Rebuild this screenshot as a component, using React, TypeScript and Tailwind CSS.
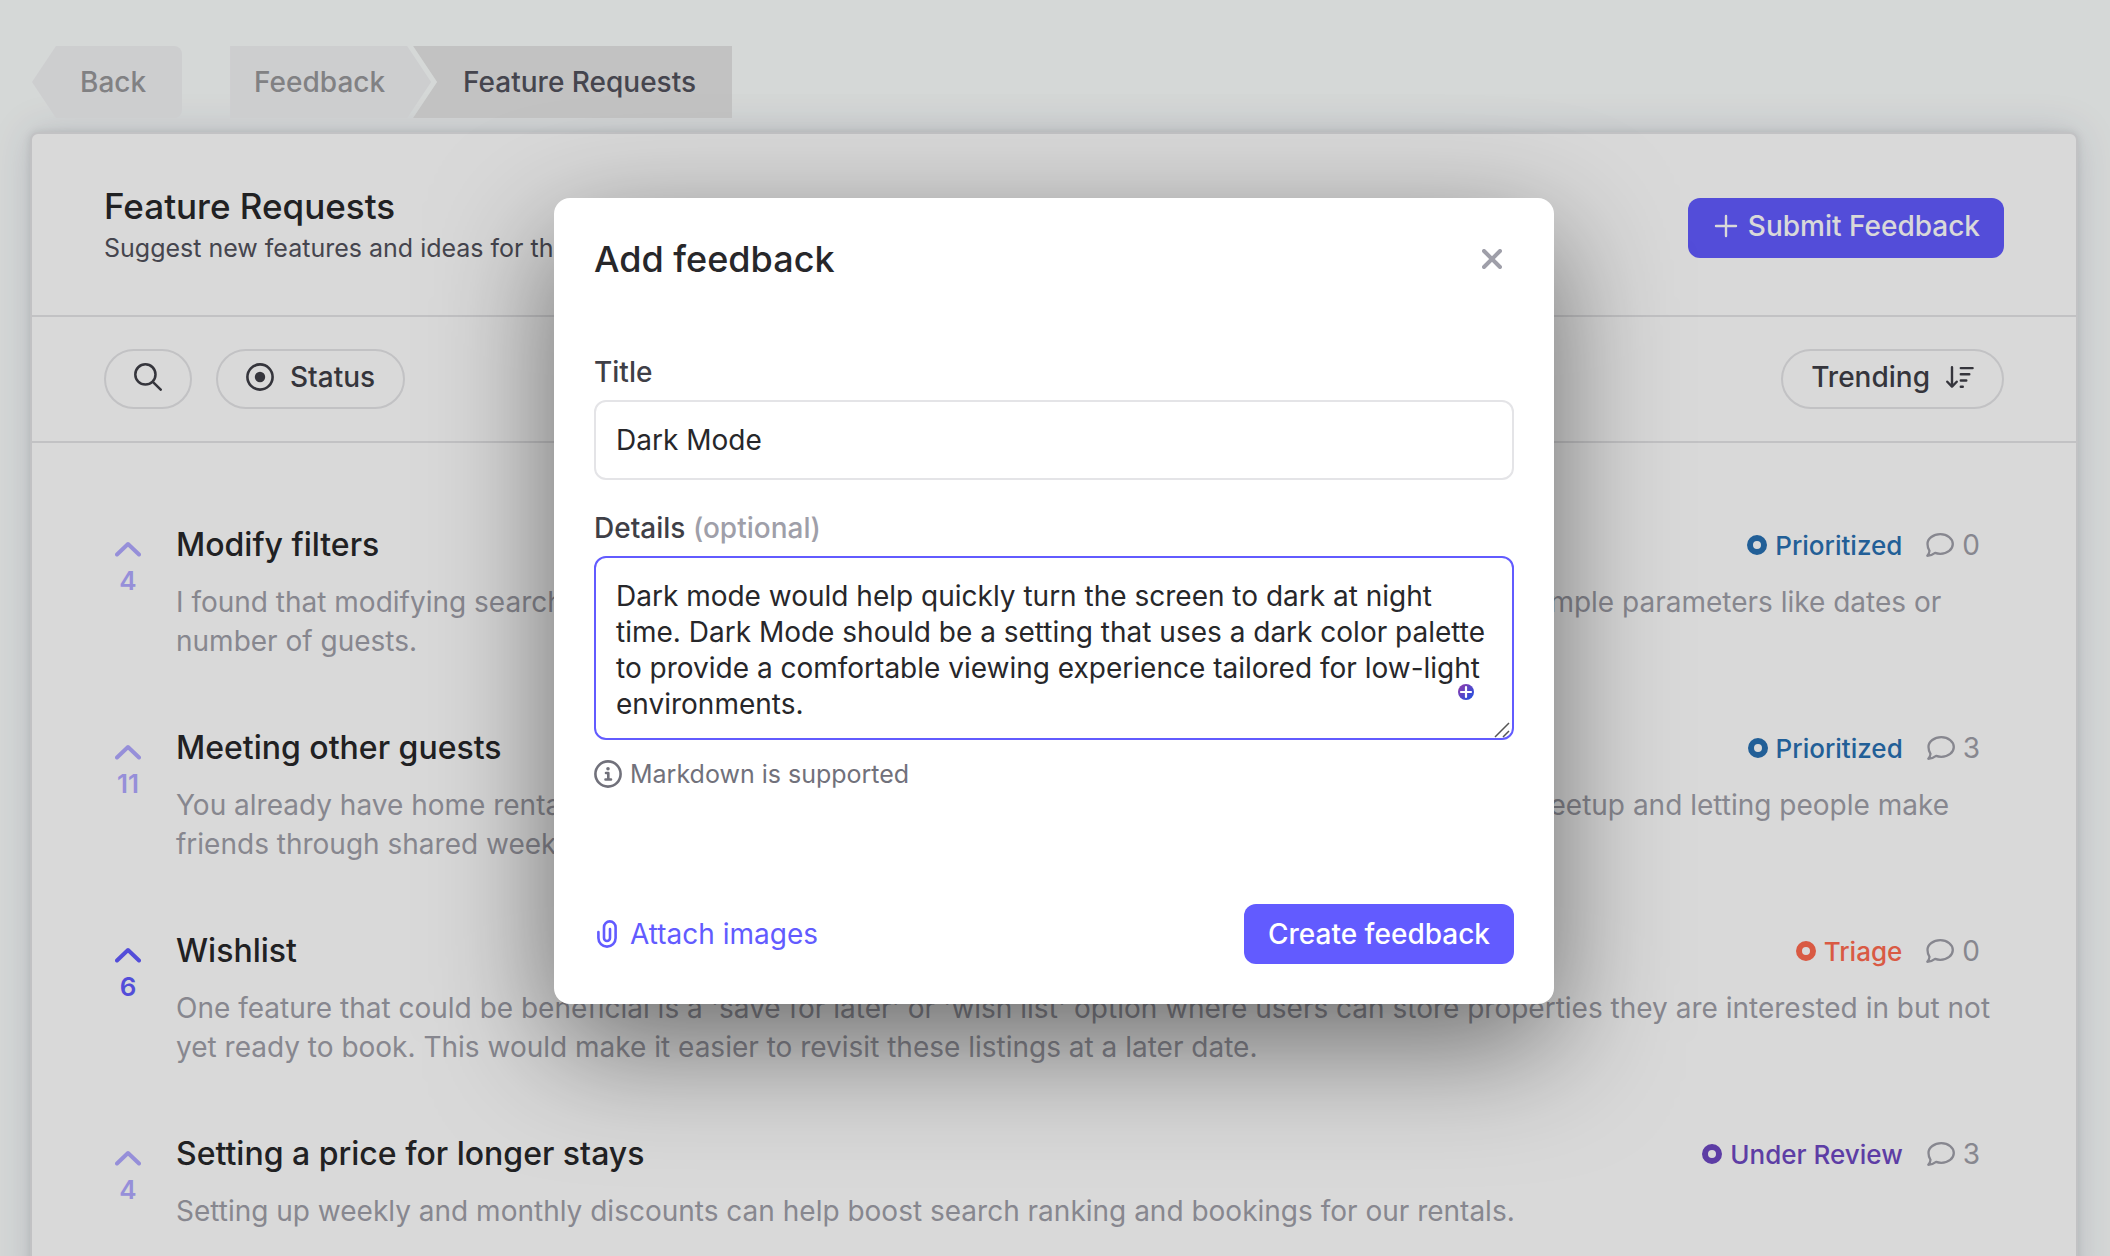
import React from "react";

type Post = {
  title: string;
  body: string;
  votes: number;
  voted?: boolean;
  status: "Prioritized" | "Triage" | "Under Review";
  comments: number;
};

const posts: Post[] = [
  {
    title: "Modify filters",
    body: "I found that modifying search filters can be rather confusing at times and it is too easy to lose track of simple parameters like dates or number of guests.",
    votes: 4,
    status: "Prioritized",
    comments: 0,
  },
  {
    title: "Meeting other guests",
    body: "You already have home rentals and experiences listed, so how about adding a weekly city community meetup and letting people make friends through shared weekend activities.",
    votes: 11,
    status: "Prioritized",
    comments: 3,
  },
  {
    title: "Wishlist",
    body: "One feature that could be beneficial is a 'save for later' or 'wish list' option where users can store properties they are interested in but not yet ready to book. This would make it easier to revisit these listings at a later date.",
    votes: 6,
    voted: true,
    status: "Triage",
    comments: 0,
  },
  {
    title: "Setting a price for longer stays",
    body: "Setting up weekly and monthly discounts can help boost search ranking and bookings for our rentals.",
    votes: 4,
    status: "Under Review",
    comments: 3,
  },
];

const statusColor: Record<Post["status"], string> = {
  Prioritized: "text-[#2970b2]",
  Triage: "text-[#ff6a4f]",
  "Under Review": "text-[#6e48c2]",
};

function SearchIcon() {
  return (
    <svg viewBox="0 0 28 28" className="size-7" fill="none" stroke="currentColor" strokeWidth="2.5" strokeLinecap="round" aria-hidden="true">
      <circle cx="11.4" cy="11.4" r="10.1" />
      <path d="M18.800 18.800l7.900 7.900" />
    </svg>
  );
}

function DotIcon() {
  return (
    <svg viewBox="0 0 28 28" className="size-7" fill="none" stroke="currentColor" strokeWidth="2.6" aria-hidden="true">
      <circle cx="14" cy="14" r="12.6" />
      <circle cx="14" cy="14" r="5.2" fill="currentColor" stroke="none" />
    </svg>
  );
}

function SortIcon() {
  return (
    <svg viewBox="0 0 28 22" className="h-[22px] w-7" fill="none" stroke="currentColor" strokeWidth="2.4" strokeLinecap="round" strokeLinejoin="round" aria-hidden="true">
      <path d="M6 1.200v19.400M1.300 15.700L6 20.700l4.700-5M14.800 2.100h11.800M14.800 8.300h8.500M14.800 14.500h5.500M14.800 20.700h2" />
    </svg>
  );
}

function CommentIcon() {
  return (
    <svg viewBox="0 0 28 24" className="h-6 w-7" fill="none" stroke="currentColor" strokeWidth="2.300" strokeLinejoin="round" aria-hidden="true">
      <path d="M14.300 1.200C21.300 1.200 26.800 5.500 26.800 11S21.300 20.800 14.300 20.800c-2 0-3.700-.3-5.200-.9C7.300 21.300 4.800 22.800 1.300 22.800c1.300-1.400 2.100-3 2.200-5C2.200 15.900 1.500 13.500 1.500 11 1.500 5.500 7.300 1.200 14.300 1.200z" />
    </svg>
  );
}

function PlusBadge() {
  return (
    <svg viewBox="0 0 16 16" className="size-4" aria-hidden="true">
      <defs>
        <linearGradient id="badge" x1="0" y1="0" x2="1" y2="1">
          <stop offset="0.2" stopColor="#7f3fb5" />
          <stop offset="0.9" stopColor="#2450e0" />
        </linearGradient>
      </defs>
      <circle cx="8" cy="8" r="8" fill="url(#badge)" />
      <path d="M8 3v10M3 8h10" stroke="#fff" strokeWidth="2.200" strokeLinecap="round" />
    </svg>
  );
}

function PostRow({ post }: { post: Post }) {
  return (
    <li className="flex items-start gap-6">
      <button
        type="button"
        aria-label={`Upvote ${post.title}`}
        className={`mt-4 flex w-12 flex-col items-center gap-2 text-[26px] leading-8 font-semibold ${post.voted ? "text-[#625bff]" : "text-[#b1a9ff]"}`}
      >
        <svg viewBox="0 0 26 16" className="h-4 w-[26px]" fill="none" stroke="currentColor" strokeWidth="4" strokeLinecap="round" strokeLinejoin="round" aria-hidden="true">
          <path d="M2 13.500L13 3l11 10.500" />
        </svg>
        {post.votes}
      </button>
      <div className="min-w-0 flex-1">
        <div className="flex items-center justify-between pr-6">
          <h2 className="text-[32px] leading-10 font-medium text-zinc-800">{post.title}</h2>
          <div className="flex items-center gap-6">
            <span className={`flex items-center gap-2 text-[26px] font-medium ${statusColor[post.status]}`}>
              <span className="size-5 rounded-full border-[6px] border-current" />
              {post.status}
            </span>
            <span className="flex items-center gap-2 text-[28px] leading-10 text-zinc-400">
              <CommentIcon />
              {post.comments}
            </span>
          </div>
        </div>
        <p className="mt-[18px] text-[28px] leading-[39px] text-zinc-400">{post.body}</p>
      </div>
    </li>
  );
}

export default function App() {
  return (
    <div className="relative h-screen overflow-hidden bg-[#fbfefd] font-['Inter',sans-serif]">
      <div className="flex flex-col px-8 pt-[46px]">
        <nav className="relative flex h-[72px] gap-12 text-[28px] font-medium">
          <a href="#back" className="flex items-center rounded-r-lg bg-[#f1f2f4] pr-9 pl-12 text-[#98989b] [clip-path:polygon(24px_0,100%_0,100%_100%,24px_100%,0_50%)]">
            Back
          </a>
          <div className="flex">
            <a href="#feedback" className="flex items-center bg-[#f1f2f4] pr-[46px] pl-6 text-[#98989b] [clip-path:polygon(0_0,calc(100%-24px)_0,100%_50%,calc(100%-24px)_100%,0_100%)]">
              Feedback
            </a>
            <a href="#requests" aria-current="page" className="-ml-[18px] flex items-center bg-[#e4e4e4] pr-9 pl-[50px] text-zinc-600 [clip-path:polygon(0_0,100%_0,100%_100%,0_100%,24px_50%)]">
              Feature Requests
            </a>
          </div>
        </nav>
        <main className="mt-3.5 -ml-0.5 rounded-lg border-2 border-zinc-200 bg-white pb-16 shadow-[0_0_40px_rgba(40,44,90,0.16),0_0_8px_rgba(0,0,0,0.1)]">
          <header className="flex items-start justify-between border-b-2 border-zinc-200 px-[72px] pt-[49px] pb-[47px]">
            <div>
              <h1 className="text-[35px] leading-[46px] font-medium text-zinc-800">Feature Requests</h1>
              <p className="text-[25px] leading-[39px] text-zinc-600">Suggest new features and ideas for the app</p>
            </div>
            <button type="button" className="mt-[15px] flex h-[60px] items-center gap-2 rounded-xl bg-[#625bff] px-6 pb-1 text-[28px] font-medium text-white">
              <svg viewBox="0 0 28 28" className="size-7" fill="none" stroke="currentColor" strokeWidth="2.400" strokeLinecap="round" aria-hidden="true">
                <path d="M14 4v20M4 14h20" />
              </svg>
              Submit Feedback
            </button>
          </header>
          <div className="flex items-center gap-6 border-b-2 border-zinc-200 px-[72px] py-8 text-[28px] font-medium text-zinc-700">
            <button type="button" aria-label="Search" className="flex h-[60px] items-center rounded-full border-2 border-zinc-200 px-7 pb-1">
              <SearchIcon />
            </button>
            <button type="button" className="flex h-[60px] items-center gap-4 rounded-full border-2 border-zinc-200 px-7 pb-1">
              <DotIcon />
              Status
            </button>
            <button type="button" className="ml-auto flex h-[60px] items-center gap-4 rounded-full border-2 border-zinc-200 px-7 pb-1">
              Trending
              <SortIcon />
            </button>
          </div>
          <ul className="flex flex-col gap-[67px] px-[72px] pt-[82px]">
            {posts.map((post) => (
              <PostRow key={post.title} post={post} />
            ))}
          </ul>
        </main>
      </div>

      <div className="absolute inset-0 flex items-start justify-center overflow-hidden bg-black/15 pt-[198px] pr-0.5">
        <form
          role="dialog"
          aria-labelledby="dialog-title"
          onSubmit={(event) => event.preventDefault()}
          className="flex w-[1000px] flex-col rounded-2xl bg-white p-10 shadow-[0_40px_120px_rgba(0,0,0,0.5)]"
        >
          <div className="flex h-11 items-center justify-between pr-3 pb-0.5">
            <h2 id="dialog-title" className="text-[36px] font-medium text-zinc-800">Add feedback</h2>
            <button type="button" aria-label="Close" className="text-zinc-400">
              <svg viewBox="0 0 20 20" className="size-5" fill="none" stroke="currentColor" strokeWidth="4" strokeLinecap="round" aria-hidden="true">
                <path d="M2 2l16 16M18 2L2 18" />
              </svg>
            </button>
          </div>
          <label htmlFor="title" className="mt-[72px] text-[28px] leading-9 font-medium text-zinc-700">Title</label>
          <input id="title" defaultValue="Dark Mode" className="mt-2.5 h-20 rounded-xl border-2 border-zinc-200 px-5 text-[28px] text-zinc-800 outline-none" />
          <label htmlFor="details" className="mt-[30px] text-[28px] leading-9 font-medium text-zinc-700">
            Details <span className="text-zinc-400">(optional)</span>
          </label>
          <div className="relative mt-2.5 flex">
            <textarea
              id="details"
              rows={4}
              className="h-[184px] w-full resize-none overflow-hidden rounded-xl border-2 border-[#625bff] px-5 pt-5 pb-4 text-[28px] leading-9 text-zinc-800 outline-none"
              defaultValue="Dark mode would help quickly turn the screen to dark at night time. Dark Mode should be a setting that uses a dark color palette to provide a comfortable viewing experience tailored for low-light environments."
            />
            <span className="absolute right-10 bottom-10">
              <PlusBadge />
            </span>
            <svg viewBox="0 0 16 16" className="absolute right-1 bottom-0.5 size-4" fill="none" stroke="#555" strokeWidth="1.500" aria-hidden="true">
              <path d="M1 15L15 1M9 15l6-6" />
            </svg>
          </div>
          <p className="mt-4 flex items-center gap-2 text-[25px] leading-9 text-zinc-500">
            <svg viewBox="0 0 28 28" className="size-7" fill="none" stroke="currentColor" strokeWidth="2.600" strokeLinecap="round" strokeLinejoin="round" aria-hidden="true">
              <circle cx="14" cy="14" r="12.600" />
              <path d="M12 13h2.300v6.500M11.500 19.500h5.500" />
              <circle cx="14" cy="8.700" r="1.800" fill="currentColor" stroke="none" />
            </svg>
            Markdown is supported
          </p>
          <div className="mt-28 flex items-center justify-between">
            <button type="button" className="flex items-center gap-2 text-[28px] text-[#625bff]">
              <svg viewBox="0 0 28 28" className="size-7" fill="none" stroke="currentColor" strokeWidth="2.600" strokeLinecap="round" aria-hidden="true">
                <path d="M4.400 12v6a8.600 8.600 0 0 0 17.200 0V7.200a5.800 5.800 0 0 0-11.600 0V18a3 3 0 0 0 6 0V9" />
              </svg>
              Attach images
            </button>
            <button type="submit" className="h-[60px] rounded-xl bg-[#625bff] px-6 text-[28px] font-medium text-white">Create feedback</button>
          </div>
        </form>
      </div>
    </div>
  );
}
